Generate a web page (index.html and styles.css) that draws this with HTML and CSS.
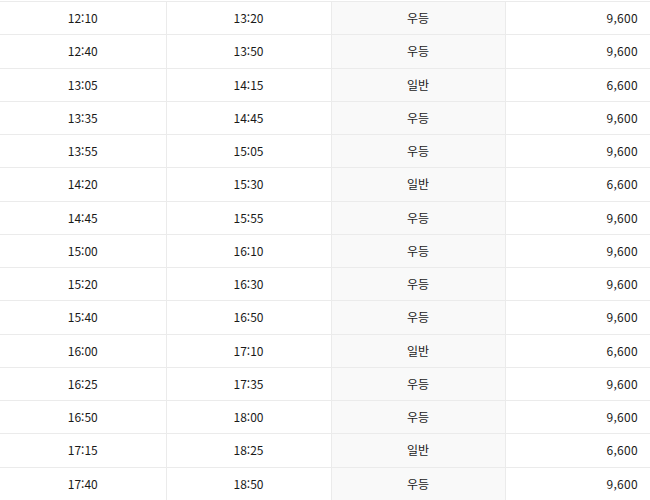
FILE: index.html
```html
<!DOCTYPE html>
<html lang="ko">
<head>
<meta charset="utf-8">
<link rel="stylesheet" href="styles.css">
</head>
<body>
<table class="timetable">
<tbody>
<tr><td>12:10</td><td>13:20</td><td class="grade">우등</td><td class="fare">9,600</td></tr>
<tr><td>12:40</td><td>13:50</td><td class="grade">우등</td><td class="fare">9,600</td></tr>
<tr><td>13:05</td><td>14:15</td><td class="grade">일반</td><td class="fare">6,600</td></tr>
<tr><td>13:35</td><td>14:45</td><td class="grade">우등</td><td class="fare">9,600</td></tr>
<tr><td>13:55</td><td>15:05</td><td class="grade">우등</td><td class="fare">9,600</td></tr>
<tr><td>14:20</td><td>15:30</td><td class="grade">일반</td><td class="fare">6,600</td></tr>
<tr><td>14:45</td><td>15:55</td><td class="grade">우등</td><td class="fare">9,600</td></tr>
<tr><td>15:00</td><td>16:10</td><td class="grade">우등</td><td class="fare">9,600</td></tr>
<tr><td>15:20</td><td>16:30</td><td class="grade">우등</td><td class="fare">9,600</td></tr>
<tr><td>15:40</td><td>16:50</td><td class="grade">우등</td><td class="fare">9,600</td></tr>
<tr><td>16:00</td><td>17:10</td><td class="grade">일반</td><td class="fare">6,600</td></tr>
<tr><td>16:25</td><td>17:35</td><td class="grade">우등</td><td class="fare">9,600</td></tr>
<tr><td>16:50</td><td>18:00</td><td class="grade">우등</td><td class="fare">9,600</td></tr>
<tr><td>17:15</td><td>18:25</td><td class="grade">일반</td><td class="fare">6,600</td></tr>
<tr><td>17:40</td><td>18:50</td><td class="grade">우등</td><td class="fare">9,600</td></tr>
</tbody>
</table>
</body>
</html>
```
FILE: styles.css
```css
html, body {
  margin: 0;
  padding: 0;
  background: #fff;
}
body {
  padding-top: 1px;
  font-family: "Noto Sans CJK KR", "DejaVu Sans", sans-serif;
  font-size: 12px;
  font-weight: 400;
  color: #1a1a1a;
}
.timetable {
  width: 650px;
  border-collapse: collapse;
  table-layout: fixed;
}
.timetable td {
  height: 33.25px;
  padding: 0;
  box-sizing: border-box;
  text-align: center;
  border-top: 1px solid #ebebeb;
  border-left: 1px solid #ebebeb;
  line-height: 1;
}
.timetable td:first-child {
  width: 166px;
  border-left: none;
}
.timetable td:nth-child(2) {
  width: 165px;
}
.timetable td.grade {
  width: 174px;
  background: #f9f9f9;
}
.timetable td.fare {
  text-align: right;
  padding-right: 12px;
  letter-spacing: 0.3px;
}
```
